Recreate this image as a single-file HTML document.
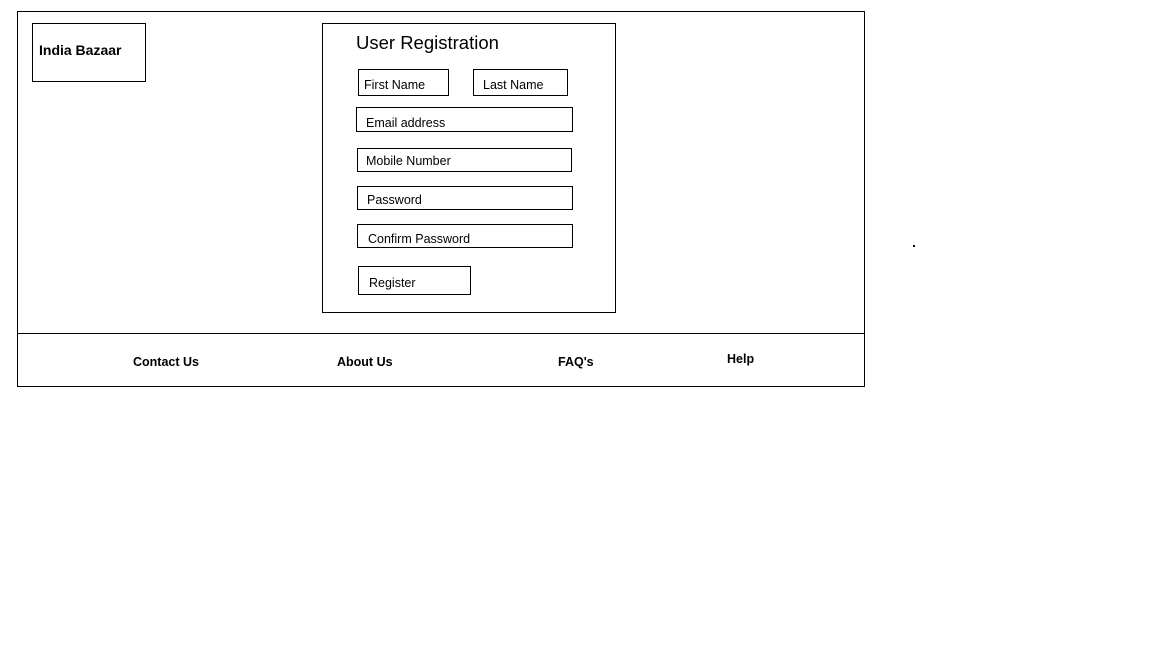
<!DOCTYPE html>
<html><head><meta charset="utf-8"><style>
body{margin:0;width:1152px;height:648px;background:#fff;position:relative;font-family:"Liberation Sans",sans-serif;color:#000;overflow:hidden}
.b{position:absolute;border:1px solid #000;box-sizing:border-box}
.t{position:absolute;font-size:12.5px;white-space:nowrap;line-height:14px}
.f{position:absolute;font-size:12.5px;font-weight:bold;white-space:nowrap;line-height:14px}
</style></head><body>
<div class="b" style="left:17px;top:11px;width:848px;height:376px"></div>
<div style="position:absolute;left:17px;top:333px;width:848px;height:1px;background:#000"></div>
<div class="b" style="left:32px;top:23px;width:114px;height:59px"></div>
<div class="f" style="left:39px;top:43px;font-size:14px">India Bazaar</div>
<div class="b" style="left:322px;top:23px;width:294px;height:290px"></div>
<div class="t" style="left:356px;top:33px;font-size:18.5px;line-height:20px">User Registration</div>
<div class="b" style="left:358px;top:69px;width:91px;height:27px"></div>
<div class="t" style="left:364px;top:78px">First Name</div>
<div class="b" style="left:473px;top:69px;width:95px;height:27px"></div>
<div class="t" style="left:483px;top:78px">Last Name</div>
<div class="b" style="left:356px;top:107px;width:217px;height:25px"></div>
<div class="t" style="left:366px;top:116px">Email address</div>
<div class="b" style="left:357px;top:148px;width:215px;height:24px"></div>
<div class="t" style="left:366px;top:154px">Mobile Number</div>
<div class="b" style="left:357px;top:186px;width:216px;height:24px"></div>
<div class="t" style="left:367px;top:193px">Password</div>
<div class="b" style="left:357px;top:224px;width:216px;height:24px"></div>
<div class="t" style="left:368px;top:232px">Confirm Password</div>
<div class="b" style="left:358px;top:266px;width:113px;height:29px"></div>
<div class="t" style="left:369px;top:276px">Register</div>
<div class="f" style="left:133px;top:355px">Contact Us</div>
<div class="f" style="left:337px;top:355px">About Us</div>
<div class="f" style="left:558px;top:355px">FAQ's</div>
<div class="f" style="left:727px;top:352px">Help</div>
<div style="position:absolute;left:913px;top:245px;width:2px;height:2px;background:#000"></div>
</body></html>
